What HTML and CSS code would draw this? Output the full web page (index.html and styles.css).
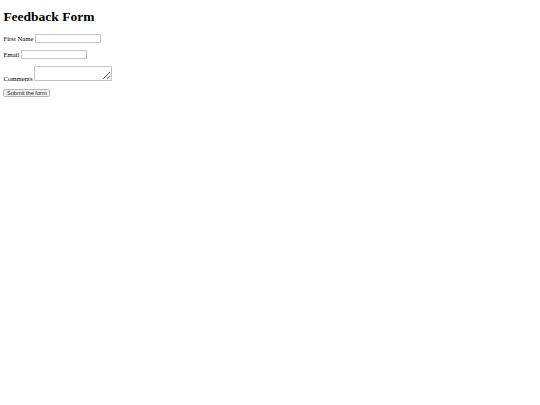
FILE: index.html
```html
<!DOCTYPE html>
<html>
<head>
<meta charset="utf-8">
<title>Feedback Form</title>
<link rel="stylesheet" href="styles.css">
</head>
<body class="doc">
<div class="page">
<h1 class="title">Feedback Form</h1>
<form class="form">
<p class="row"><label class="label" for="fname">First Name</label> <input class="field" type="text" id="fname"></p>
<p class="row"><label class="label" for="email">Email</label> <input class="field" type="text" id="email"></p>
<p class="row"><label class="label" for="comments">Comments</label> <textarea class="area" id="comments"></textarea></p>
<input class="submit" type="submit" value="Submit the form">
</form>
</div>
</body>
</html>
```
FILE: styles.css
```css
.doc {
  margin: 0;
  background: #ffffff;
}
.page {
  zoom: 0.421875;
  margin: 8px;
  font-family: "Liberation Serif", "Times New Roman", serif;
  font-size: 16px;
  color: #000000;
}
.title {
  font-size: 2em;
  font-weight: bold;
  margin: 0.67em 0;
}
.row {
  margin: 1em 0;
}
.field,
.area,
.submit {
  font-family: "Liberation Sans", Arial, sans-serif;
  font-size: 13.333px;
}
.field {
  box-sizing: border-box;
  width: 157px;
  height: 22px;
  border: 2px solid #c4c4c4;
  border-radius: 2px;
  background: #ffffff;
}
.area {
  box-sizing: border-box;
  width: 183px;
  height: 35px;
  border: 2px solid #c4c4c4;
  border-radius: 2px;
  background: #ffffff;
}
.submit {
  box-sizing: border-box;
  width: 111px;
  height: 20px;
  padding: 0 4px;
  background: #efefef;
  border: 2px solid #b8b8b8;
  border-radius: 4px;
  color: #222222;
}
```
